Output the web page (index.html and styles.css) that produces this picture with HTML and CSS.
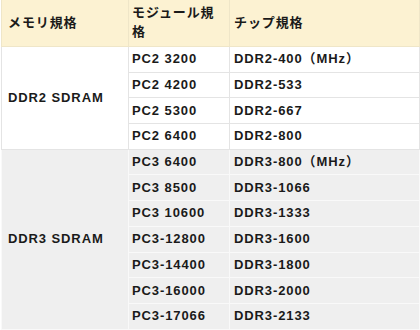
FILE: index.html
```html
<!DOCTYPE html>
<html lang="ja">
<head>
<meta charset="utf-8">
<link rel="stylesheet" href="styles.css">
</head>
<body>
<table class="spec">
  <thead>
    <tr>
      <th class="c1">メモリ規格</th>
      <th class="c2">モジュール規格</th>
      <th class="c3">チップ規格</th>
    </tr>
  </thead>
  <tbody class="ddr2">
    <tr><td class="c1" rowspan="4">DDR2 SDRAM</td><td class="c2">PC2 3200</td><td class="c3">DDR2-400（MHz）</td></tr>
    <tr><td class="c2">PC2 4200</td><td class="c3">DDR2-533</td></tr>
    <tr><td class="c2">PC2 5300</td><td class="c3">DDR2-667</td></tr>
    <tr><td class="c2">PC2 6400</td><td class="c3">DDR2-800</td></tr>
  </tbody>
  <tbody class="ddr3">
    <tr><td class="c1" rowspan="7">DDR3 SDRAM</td><td class="c2">PC3 6400</td><td class="c3">DDR3-800（MHz）</td></tr>
    <tr><td class="c2">PC3 8500</td><td class="c3">DDR3-1066</td></tr>
    <tr><td class="c2">PC3 10600</td><td class="c3">DDR3-1333</td></tr>
    <tr><td class="c2">PC3-12800</td><td class="c3">DDR3-1600</td></tr>
    <tr><td class="c2">PC3-14400</td><td class="c3">DDR3-1800</td></tr>
    <tr><td class="c2">PC3-16000</td><td class="c3">DDR3-2000</td></tr>
    <tr><td class="c2">PC3-17066</td><td class="c3">DDR3-2133</td></tr>
  </tbody>
</table>
</body>
</html>
```
FILE: styles.css
```css
html, body {
  margin: 0;
  padding: 0;
  background: #ffffff;
}
body {
  font-family: "Liberation Sans", Arial, "Noto Sans CJK JP", sans-serif;
  color: #1a1a1a;
}
.spec {
  border-collapse: collapse;
  margin-left: 1px;
  width: 419px;
  table-layout: fixed;
}
.spec th, .spec td {
  text-align: left;
  font-weight: bold;
  font-size: 13px;
  letter-spacing: 0.9px;
  vertical-align: middle;
  border: 1px solid #e4e4e4;
  padding: 0 4px;
}
.spec th {
  background: #fcf2d2;
  line-height: 19px;
  height: 44px;
  padding-top: 0;
  padding-bottom: 2px;
  border-top: none;
  border-color: #efe6c8;
}
.spec td {
  line-height: 16px;
  height: 24.7px;
  padding-top: 0;
  padding-bottom: 0;
}
.spec .c1 { width: 116px; padding-left: 6px; }
.spec .c2 { width: 93px; padding-left: 3px; }
.spec .c3 { padding-left: 4px; }
.ddr2 td { background: #ffffff; }
.ddr3 td {
  background: #efefef;
  border-color: #f9f9f9;
}
.ddr3 tr:first-child td { border-top-color: #e4e4e4; }
```
